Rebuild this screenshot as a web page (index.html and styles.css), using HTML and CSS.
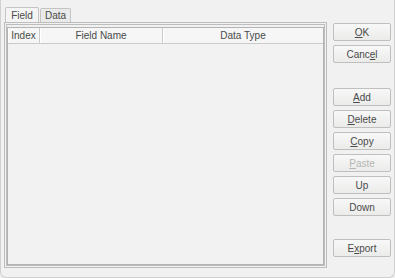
FILE: index.html
```html
<!DOCTYPE html>
<html lang="en">
<head>
    <meta charset="UTF-8">
    <title>Fields</title>
    <link rel="stylesheet" href="styles.css">
</head>
<body>
    <div class="dialog">
        <div class="left">
            <div class="tabs">
                <div class="tab active">Field</div>
                <div class="tab">Data</div>
            </div>
            <div class="panel">
                <div class="grid">
                    <div class="head">
                        <div class="col c-index">Index</div>
                        <div class="col c-name">Field Name</div>
                        <div class="col c-type">Data Type</div>
                    </div>
                    <div class="rows"></div>
                </div>
            </div>
        </div>
        <div class="buttons">
            <button><u>O</u>K</button>
            <button>Canc<u>e</u>l</button>
            <button class="gap-top"><u>A</u>dd</button>
            <button><u>D</u>elete</button>
            <button><u>C</u>opy</button>
            <button disabled><u>P</u>aste</button>
            <button>Up</button>
            <button>Down</button>
            <button class="gap-export">E<u>x</u>port</button>
        </div>
    </div>
</body>
</html>
```
FILE: styles.css
```css
* { margin: 0; padding: 0; box-sizing: border-box; }
body { background: #f0f1f0; font-family: 'Liberation Sans', Arial, sans-serif; font-size: 10px; color: #4a4a4a; }
.dialog { width: 395px; height: 278px; display: flex; border: 1px solid #cfd0cf; border-top: none; border-radius: 0 0 6px 6px; padding: 7px 0 0 3px; }
.left { width: 323px; height: 261px; display: flex; flex-direction: column; }
.tabs { display: flex; height: 15px; padding-left: 1px; align-items: flex-end; }
.tab { width: 31px; height: 14px; border: 1px solid #c3c4c3; border-bottom: none; border-radius: 2px 2px 0 0; background: #e9eae9; line-height: 13px; text-align: center; margin-right: 1px; }
.tab.active { width: 34px; height: 15px; background: #f3f4f3; line-height: 15px; }
.panel { flex: 1; border: 3px double #bcbdbc; padding: 2px 0 0 0; display: flex; }
.grid { flex: 1; border: 1px solid #b3b4b3; display: flex; flex-direction: column; background: #f1f2f1; }
.head { display: flex; height: 16px; border-bottom: 1px solid #cacbca; background: #f5f6f5; }
.col { line-height: 15px; text-align: center; border-right: 1px solid #cacbca; box-shadow: inset 1px 0 0 #fff; }
.c-index { width: 32px; }
.c-name { width: 123px; }
.c-type { flex: 1; border-right: none; }
.rows { flex: 1; }
.buttons { display: flex; flex-direction: column; padding: 16px 0 0 6px; }
button { width: 58px; height: 18px; margin-bottom: 4px; border: 1px solid #bebfbe; border-radius: 2px; background: linear-gradient(#f7f8f7, #ebecea); font-family: inherit; font-size: 10px; color: #4a4a4a; }
button u { text-decoration: underline; }
button:disabled { color: #b4b5b4; }
.gap-top { margin-top: 21px; }
.gap-export { margin-top: 19px; }
```
